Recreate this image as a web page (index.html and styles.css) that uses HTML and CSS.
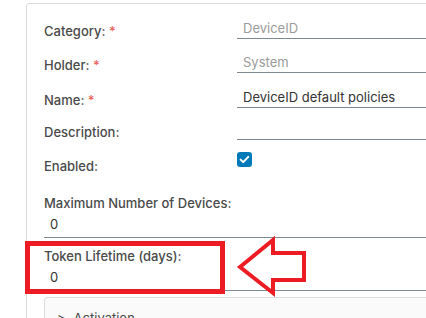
FILE: index.html
```html
<!DOCTYPE html>
<html lang="en">
<head>
<meta charset="utf-8">
<title>Policy</title>
<link rel="stylesheet" href="styles.css">
</head>
<body>
<div class="card">
  <div class="form-grid">
    <label class="label">Category: <span class="req">*</span></label>
    <div class="input muted">DeviceID</div>
    <label class="label">Holder: <span class="req">*</span></label>
    <div class="input muted">System</div>
    <label class="label">Name: <span class="req">*</span></label>
    <div class="input">DeviceID default policies</div>
    <label class="label">Description:</label>
    <div class="input"></div>
    <label class="label">Enabled:</label>
    <div class="checkbox">
      <svg width="15" height="15" viewBox="0 0 15 15"><path d="M3.6 7.6 L6.2 10.1 L11.3 4.9" fill="none" stroke="#fff" stroke-width="2" stroke-linecap="round" stroke-linejoin="round"/></svg>
    </div>
  </div>
  <div class="stack first">
    <label class="label">Maximum Number of Devices:</label>
    <div class="value">0</div>
  </div>
  <div class="stack second">
    <label class="label">Token Lifetime (days):</label>
    <div class="value">0</div>
  </div>
  <div class="panel">
    <span class="chev">&gt;</span><span class="panel-title">Activation</span>
  </div>
</div>
<div class="highlight"></div>
<svg class="arrow" width="426" height="318" viewBox="0 0 426 318">
  <polygon points="240,267 273,240 273,253 304,253 304,280 273,280 273,293" fill="none" stroke="#ed1c24" stroke-width="4" stroke-linejoin="miter"/>
</svg>
</body>
</html>
```

FILE: styles.css
```css
html, body {
  margin: 0;
  padding: 0;
  background: #fff;
  overflow: hidden;
}
body {
  position: relative;
  width: 426px;
  height: 318px;
  font-family: "Inter", "Lato", sans-serif;
  font-size: 13px;
  font-style: normal;
  color: #333;
}
.card {
  margin: 3px -30px 0 26px;
  border: 1px solid #dcdcdc;
  border-radius: 3px;
  padding: 1px 0 40px 17px;
}
.form-grid {
  display: grid;
  grid-template-columns: 193px 1fr;
  grid-template-rows: 34px 34px 35px 32px 34px;
  align-items: end;
}
.label {
  display: block;
  font-size: 13px;
  line-height: 16px;
  font-weight: 500;
  font-style: normal;
  color: #4a4a4a;
}
.req {
  color: #e8615a;
}
.input {
  box-sizing: border-box;
  height: 21px;
  line-height: 20px;
  padding-left: 6px;
  border-bottom: 1px solid #7d8a92;
  color: #333;
  font-style: normal;
  white-space: nowrap;
}
.input.muted {
  color: #9b9b9b;
}
.checkbox {
  width: 15px;
  height: 15px;
  border-radius: 3px;
  background: #0079b8;
  margin-bottom: 7px;
  display: flex;
}
.stack {
  display: flex;
  flex-direction: column;
}
.stack.first {
  margin-top: 21px;
}
.stack.second {
  margin-top: 10px;
}
.value {
  margin-top: 3px;
  line-height: 20px;
  padding: 0 0 3px 6px;
  border-bottom: 1px solid #7d8a92;
  color: #333;
}
.panel {
  margin-top: 6px;
  border: 1px solid #dcdcdc;
  border-radius: 3px;
  background: #fafafa;
  padding: 12px 0 20px 12px;
  display: flex;
  align-items: center;
  gap: 8px;
  color: #4a4a4a;
}
.chev {
  font-size: 13px;
}
.panel-title {
  font-size: 13px;
}
.highlight {
  position: absolute;
  left: 25px;
  top: 241px;
  width: 200px;
  height: 53px;
  box-sizing: border-box;
  border: 5px solid #ed1c24;
}
.arrow {
  position: absolute;
  left: 0;
  top: 0;
}
```
